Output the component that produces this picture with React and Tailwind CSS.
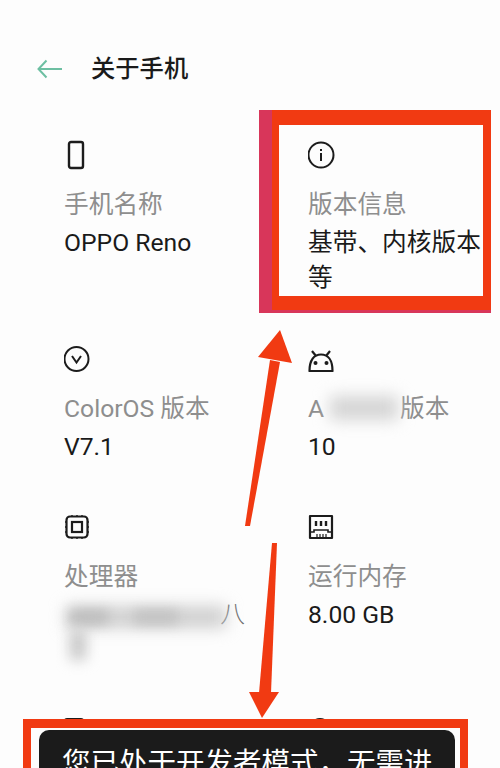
import React from "react";

// row icons, drawn to match the phone's settings glyphs
const PhoneIcon = () => (
  <svg className="ml-[3px]" width="18" height="30" viewBox="0 0 18 30" fill="none" stroke="#1c1c1c" strokeWidth="2.4">
    <rect x="2" y="2" width="14" height="26" rx="2" />
  </svg>
);

const InfoIcon = () => (
  <svg width="28" height="28" viewBox="0 0 28 28" fill="none" stroke="#1c1c1c" strokeWidth="2">
    <circle cx="13" cy="14" r="12.5" />
    <line x1="13" y1="12" x2="13" y2="20" />
    <line x1="13" y1="8" x2="13" y2="10" />
  </svg>
);

const VersionIcon = () => (
  <svg width="28" height="28" viewBox="0 0 28 28" fill="none" stroke="#1c1c1c" strokeWidth="2">
    <circle cx="12.5" cy="14" r="12" />
    <path d="M8 11 L12.5 17.5 L17 11" />
  </svg>
);

const AndroidIcon = () => (
  <svg width="26" height="26" viewBox="0 0 26 26" fill="none" stroke="#1c1c1c" strokeWidth="2.2">
    <path d="M1.5 25 C1.5 14 6 8.5 13 8.5 C20 8.5 24.5 14 24.5 25 Z" strokeLinejoin="round" />
    <line x1="4" y1="5" x2="8" y2="10" />
    <line x1="22" y1="5" x2="18" y2="10" />
    <circle cx="7.5" cy="17" r="2" fill="#1c1c1c" stroke="none" />
    <circle cx="18.5" cy="17" r="2" fill="#1c1c1c" stroke="none" />
  </svg>
);

const ChipIcon = () => (
  <svg width="26" height="26" viewBox="0 0 26 26" fill="none" stroke="#1c1c1c" strokeWidth="2.2">
    <rect x="2.5" y="2.5" width="21" height="21" rx="3.5" />
    <rect x="8" y="8" width="10" height="10" />
    <path d="M1 8h2M1 13h2M1 18h2M23 8h2M23 13h2M23 18h2M8 1v2M13 1v2M18 1v2M8 23v2M13 23v2M18 23v2" strokeWidth="1.4" />
  </svg>
);

const RamIcon = () => (
  <svg width="26" height="26" viewBox="0 0 26 26" fill="none" stroke="#1c1c1c" strokeWidth="2.2">
    <path d="M2 2 H24 V24 H2 Z" strokeLinejoin="round" />
    <path d="M8 7v5M13 7v5M18 7v5" strokeWidth="2.4" />
    <path d="M2 18 H6 V16 H20 V18 H24" strokeWidth="1.6" />
    <path d="M9 20v3M12 20v3M15 20v3M18 20v3" strokeWidth="1.2" />
  </svg>
);

const Item = ({ icon, label, children }) => (
  <div>
    <div className="h-[30px] flex items-center">{icon}</div>
    <div className="mt-[17px] text-[24.7px] leading-[36px] text-[#8e8e8e] whitespace-nowrap">{label}</div>
    <div className="mt-[2px] text-[24.7px] leading-[35px] text-[#1a1a1a]">{children}</div>
  </div>
);

export default function App() {
  return (
    <div
      className="relative h-[768px] overflow-hidden bg-[#fdfdfd]"
      style={{ fontFamily: "Roboto, 'Noto Sans CJK SC', sans-serif" }}
    >
      {/* header */}
      <div className="flex items-center h-[38px] mt-[50px] mb-[52px] pl-[37px] gap-[29px]">
        <svg width="25" height="20" viewBox="0 0 25 20" fill="none" stroke="#6dbfa2" strokeWidth="2">
          <path d="M25 10 H1.5 M9.5 1.5 L1.5 10 L9.5 18.5" />
        </svg>
        <div className="text-[24.3px] text-[#1a1a1a] font-medium">关于手机</div>
      </div>

      {/* info grid */}
      <div className="grid grid-cols-[244px_175px] gap-y-[48.5px] pl-[64px]">
        <Item icon={<PhoneIcon />} label="手机名称">OPPO Reno</Item>
        <Item icon={<InfoIcon />} label="版本信息">基带、内核版本等</Item>
        <Item icon={<VersionIcon />} label="ColorOS 版本">V7.1</Item>
        <Item
          icon={<AndroidIcon />}
          label={
            <span>
              A<span className="inline-block w-[76px]" />版本
            </span>
          }
        >
          10
        </Item>
        <Item icon={<ChipIcon />} label="处理器">
          <div className="w-[181px] text-right text-[#6e6e6e] font-light">八</div>
          <div className="h-[35px]" />
        </Item>
        <Item icon={<RamIcon />} label="运行内存">8.00 GB</Item>
        <div className="h-[30px] pt-[2px]">
          <div className="w-[20px] h-[28px] rounded-[3px] border-2 border-[#1c1c1c]" />
        </div>
        <div className="h-[30px] pt-[2px]">
          <div className="w-[24px] h-[28px] rounded-full border-2 border-[#1c1c1c]" />
        </div>
      </div>

      {/* blurred-out bits of the screenshot */}
      <div className="absolute left-[330px] top-[396px] w-[68px] h-[24px] bg-[#d4d4d4] blur-[8px]" />
      <div className="absolute left-[66px] top-[606px] w-[160px] h-[22px] bg-[#cfcfcf] blur-[8px]" />
      <div className="absolute left-[70px] top-[610px] w-[38px] h-[14px] bg-[#bdbdbd] blur-[6px]" />
      <div className="absolute left-[134px] top-[610px] w-[44px] h-[14px] bg-[#c2c2c2] blur-[6px]" />
      <div className="absolute left-[70px] top-[630px] w-[16px] h-[30px] bg-[#c6c6c6] blur-[7px]" />

      {/* top red frame, pink edge then red */}
      <div className="absolute left-[259px] top-[110px] w-[232px] h-[203px] border-l-[13px] border-b-[3px] border-[#d8365a]">
        <div className="h-full border-t-[15px] border-l-[7px] border-r-[8px] border-b-[14px] border-[#f13a12]" />
      </div>

      {/* arrows */}
      <svg className="absolute left-0 top-0" width="500" height="768" fill="#f13a12">
        <polygon points="245,526 250,526 280,362 270,360" />
        <polygon points="280,330 258,357 292,363" />
        <polygon points="272,543 277,543 271,693 259,693" />
        <polygon points="249,692 279,692 262,718" />
      </svg>

      {/* bottom red frame + toast */}
      <div className="absolute left-[23px] top-[719px] w-[445px] h-[60px] border-x-[8px] border-t-[9px] border-[#f13a12] bg-[#fdfdfd] pl-[8px] pr-[5px] pt-[2px]">
        <div className="rounded-[10px] bg-[#1b1b1b] h-[80px] pt-[14px] pl-[23px] text-[28.5px] leading-[40px] text-white whitespace-nowrap">
          您已处于开发者模式，无需进
        </div>
      </div>
    </div>
  );
}
